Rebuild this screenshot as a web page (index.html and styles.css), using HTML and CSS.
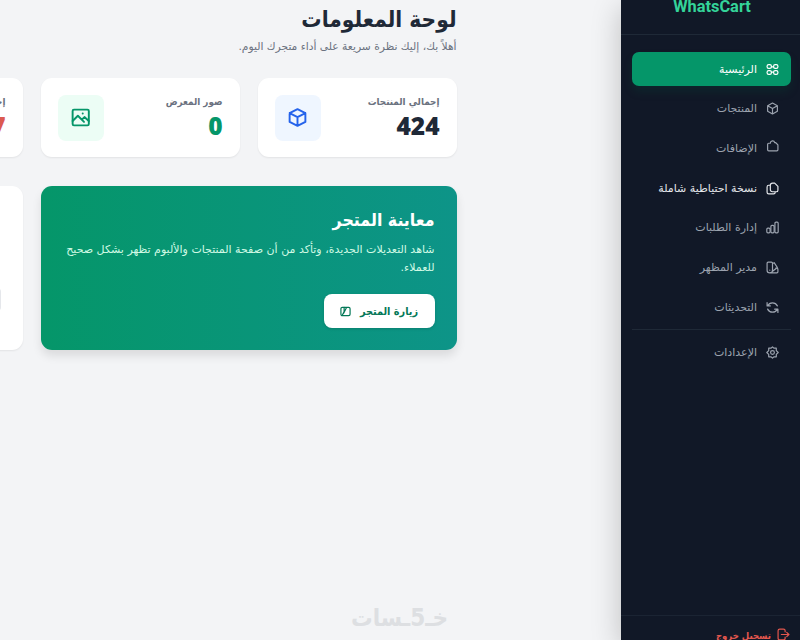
FILE: index.html
```html
<!DOCTYPE html>
<html lang="ar" dir="rtl">
<head>
    <meta charset="UTF-8">
    <title>WhatsCart - لوحة المعلومات</title>
    <link rel="stylesheet" href="styles.css">
</head>
<body>
    <aside class="sidebar">
        <div class="brand">WhatsCart</div>
        <nav class="menu">
            <a class="menu-item active">
                <svg class="icon" viewBox="0 0 24 24"><rect x="2" y="3" width="8" height="7" rx="3"/><rect x="14" y="3" width="8" height="7" rx="3"/><rect x="2" y="14" width="8" height="7" rx="3"/><rect x="14" y="14" width="8" height="7" rx="3"/><path d="M10 7h4M10 17h4"/></svg>
                <span>الرئيسية</span>
            </a>
            <a class="menu-item">
                <svg class="icon" viewBox="0 0 24 24"><path d="M12 2l9 5v10l-9 5-9-5V7zM3 7l9 5 9-5M12 12v10"/></svg>
                <span>المنتجات</span>
            </a>
            <a class="menu-item">
                <svg class="icon raised" viewBox="0 0 24 24"><path d="M5 6h3c0-5 7-6 8-1h2l4 4v9a2 2 0 0 1-2 2H5a2 2 0 0 1-2-2V8a2 2 0 0 1 2-2z"/></svg>
                <span>الإضافات</span>
            </a>
            <a class="menu-item bright">
                <svg class="icon" viewBox="0 0 24 24"><path d="M12 2h4l6 6v7a3 3 0 0 1-3 3h-7a4 4 0 0 1-4-4V6a4 4 0 0 1 4-4zM8 6H5a3 3 0 0 0-3 3v10a3 3 0 0 0 3 3h9a3 3 0 0 0 3-3v-1"/></svg>
                <span>نسخة احتياطية شاملة</span>
            </a>
            <a class="menu-item">
                <svg class="icon" viewBox="0 0 24 24"><rect x="1.500" y="13" width="6" height="9" rx="2"/><rect x="9" y="8" width="6" height="14" rx="2"/><rect x="16.500" y="2" width="6" height="20" rx="2"/></svg>
                <span>إدارة الطلبات</span>
            </a>
            <a class="menu-item">
                <svg class="icon" viewBox="0 0 24 24"><path d="M4 2h6a2 2 0 0 1 2 2v13a5 5 0 0 1-10 0V4a2 2 0 0 1 2-2zM12 5l3-2 6 9-10 8M18 13h2a2 2 0 0 1 2 2v5a2 2 0 0 1-2 2H7M7 17v.1"/></svg>
                <span>مدير المظهر</span>
            </a>
            <a class="menu-item">
                <svg class="icon" viewBox="0 0 24 24"><path d="M2 3v6h6M3 9A10 10 0 0 1 21 9M22 21v-6h-6M21 15A10 10 0 0 1 3 15"/></svg>
                <span>التحديثات</span>
            </a>
            <a class="menu-item settings">
                <svg class="icon" viewBox="0 0 24 24"><path d="M9.500 4L12 1.500l2.500 2.500h4.500v4.500L22.500 12 19 15.500V20h-4.500L12 22.500 9.500 20H5v-4.500L1.500 12 5 8.500V4z"/><circle cx="12" cy="12" r="3.500"/></svg>
                <span>الإعدادات</span>
            </a>
        </nav>
        <a class="logout">
            <svg class="icon" viewBox="0 0 24 24"><path d="M15 7V5a3 3 0 0 0-3-3H5a3 3 0 0 0-3 3v14a3 3 0 0 0 3 3h7a3 3 0 0 0 3-3v-2M8 12h14M18 8l4 4-4 4"/></svg>
            <span>تسجيل خروج</span>
        </a>
    </aside>

    <main class="main">
        <header class="page-head">
            <h1>لوحة المعلومات</h1>
            <p>أهلاً بك، إليك نظرة سريعة على أداء متجرك اليوم.</p>
        </header>
        <div class="grid">
            <section class="card stat">
                <div>
                    <div class="stat-label">إجمالي المنتجات</div>
                    <div class="stat-value">424</div>
                </div>
                <div class="stat-icon blue">
                    <svg viewBox="0 0 24 24"><path d="M12 2.500l9 4.500v10l-9 4.500L3 17V7zM3 7l9 4.500L21 7M12 11.500v10"/></svg>
                </div>
            </section>
            <section class="card stat">
                <div>
                    <div class="stat-label">صور المعرض</div>
                    <div class="stat-value green">0</div>
                </div>
                <div class="stat-icon mint">
                    <svg viewBox="0 0 24 24"><rect x="3" y="3" width="18.500" height="18" rx="1.500"/><path d="M3 16l6-6 7 7M13.500 14.500l3-3 5 4.500M14.500 7.500h.1"/></svg>
                </div>
            </section>
            <section class="card stat">
                <div>
                    <div class="stat-label">إجمالي الطلبات</div>
                    <div class="stat-value red">7</div>
                </div>
            </section>
            <section class="preview">
                <h2>معاينة المتجر</h2>
                <p>شاهد التعديلات الجديدة، وتأكد من أن صفحة المنتجات والألبوم تظهر بشكل صحيح للعملاء.</p>
                <a class="visit">
                    <span>زيارة المتجر</span>
                    <svg viewBox="0 0 24 24"><rect x="2" y="3" width="20" height="18" rx="3"/><path d="M9 3v9l-4 8M14 4L8 16"/></svg>
                </a>
            </section>
            <section class="card links">
                <div class="link-box"></div>
            </section>
        </div>
    </main>
    <div class="watermark">خـ5ـسات</div>
</body>
</html>
```

FILE: styles.css
```css
* {
    box-sizing: border-box;
}
body {
    margin: 0;
    height: 640px;
    display: flex;
    overflow: hidden;
    background: #f3f4f6;
    font-family: "DejaVu Sans", sans-serif;
    color: #1f2937;
}
svg {
    fill: none;
    stroke: currentColor;
    stroke-width: 2.2;
    stroke-linecap: round;
    stroke-linejoin: round;
    flex-shrink: 0;
}
h1, h2, p {
    margin: 0;
}
h1, h2, .stat-label, .logout, .visit, .watermark {
    font-family: "DejaVu Sans Condensed", "DejaVu Sans", sans-serif;
}

/* sidebar */
.sidebar {
    width: 179px;
    height: 640px;
    flex-shrink: 0;
    display: flex;
    flex-direction: column;
    background: #111827;
    color: #9ca3af;
    box-shadow: 0 8px 28px rgba(0, 0, 0, 0.22);
}
.brand {
    height: 35px;
    flex-shrink: 0;
    padding-left: 3px;
    border-bottom: 1px solid #1f2937;
    font: 700 16.4px/13px Roboto, sans-serif;
    text-align: center;
    color: #34d399;
}
.menu {
    flex: 1;
    display: flex;
    flex-direction: column;
    gap: 5.7px;
    padding: 17px 9px 0 11px;
}
.menu-item {
    height: 34px;
    display: flex;
    align-items: center;
    gap: 9px;
    padding: 0 12px;
    border-radius: 7px;
    font-size: 11px;
    white-space: nowrap;
}
.icon {
    width: 13px;
    height: 13px;
}
.raised {
    margin-bottom: 3px;
}
.active {
    background: #059669;
    color: #fff;
    box-shadow: 0 6px 9px rgba(5, 80, 60, 0.22);
}
.bright {
    color: #e5e7eb;
}
.settings {
    position: relative;
    margin-top: 6px;
}
.settings::before {
    content: "";
    position: absolute;
    top: -7px;
    left: 0;
    right: 0;
    border-top: 1px solid #1f2937;
}
.logout {
    height: 25px;
    display: flex;
    align-items: flex-start;
    gap: 6px;
    padding: 12px 10px 0;
    border-top: 1px solid #1b2433;
    font-size: 9.5px;
    line-height: 15px;
    font-weight: bold;
    color: #e4574e;
}

/* content */
.main {
    flex: 1;
    min-width: 0;
    padding: 6px 164.5px 0 0;
}
.page-head {
    height: 72px;
}
.page-head h1 {
    font-size: 22.5px;
    line-height: 27px;
}
.page-head p {
    margin-top: 5px;
    font-size: 10.7px;
    line-height: 18px;
    color: #6b7280;
    white-space: nowrap;
}
.grid {
    display: grid;
    grid-template-columns: repeat(3, 199px);
    grid-template-rows: 79px 164px;
    gap: 29px 18px;
}
.card {
    background: #fff;
    border-radius: 11px;
    box-shadow: 0 1px 2px rgba(0, 0, 0, 0.07);
}
.stat {
    display: flex;
    justify-content: space-between;
    align-items: center;
    padding: 0 17px;
}
.stat-label {
    font-size: 9.8px;
    line-height: 16px;
    font-weight: bold;
    color: #6b7280;
    white-space: nowrap;
}
.stat-value {
    font: 800 24.5px/32px "Open Sans", sans-serif;
}
.green {
    color: #059669;
}
.red {
    color: #dc5a50;
}
.stat-icon {
    width: 46px;
    height: 46px;
    display: flex;
    align-items: center;
    justify-content: center;
    border-radius: 8px;
}
.stat-icon svg {
    width: 21px;
    height: 21px;
}
.blue {
    background: #eff6ff;
    color: #2563eb;
}
.mint {
    background: #ecfdf5;
    color: #059669;
}
.preview {
    grid-column: span 2;
    padding: 20px 22px 0 18px;
    border-radius: 11px;
    background: linear-gradient(to left, #0d9488, #059669);
    box-shadow: 0 6px 10px rgba(0, 0, 0, 0.1);
    color: #fff;
}
.preview h2 {
    font-size: 17.6px;
    line-height: 28px;
}
.preview p {
    margin-top: 7px;
    font-size: 11px;
    line-height: 18px;
    color: #d1fae5;
}
.visit {
    width: 111px;
    height: 34px;
    margin-top: 17px;
    display: flex;
    align-items: center;
    justify-content: center;
    gap: 9px;
    border-radius: 8px;
    background: #fff;
    color: #047857;
    font-size: 10.8px;
    font-weight: bold;
    box-shadow: 0 1px 3px rgba(0, 0, 0, 0.15);
    white-space: nowrap;
}
.visit svg {
    width: 11px;
    height: 11px;
    stroke-width: 2.6;
}
.links {
    display: flex;
    justify-content: flex-start;
    align-items: flex-end;
    padding: 0 22px 39px;
}
.link-box {
    width: 150px;
    height: 23px;
    border-radius: 4px;
    background: #e5e7eb;
}

.watermark {
    position: absolute;
    left: 351px;
    top: 603px;
    font-size: 24px;
    line-height: 30px;
    font-weight: bold;
    color: #dddfe2;
}
```
